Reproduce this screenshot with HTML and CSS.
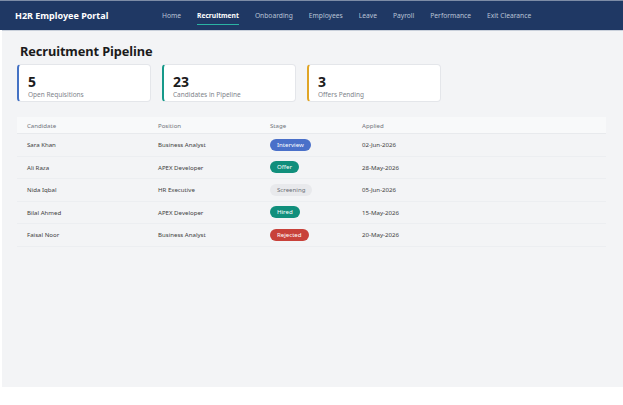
FILE: index.html
```html
<!DOCTYPE html>
<html lang="en">
<head>
  <meta charset="UTF-8">
  <meta name="viewport" content="width=device-width, initial-scale=1.0">
  <title>H2R Employee Portal</title>
  <link rel="stylesheet" href="styles.css">
</head>
<body>
  <!-- Top bar -->
  <header class="topbar">
    <div class="brand">H2R Employee Portal</div>
    <nav class="nav">
      <a href="#">Home</a>
      <a href="#" class="active">Recruitment</a>
      <a href="#">Onboarding</a>
      <a href="#">Employees</a>
      <a href="#">Leave</a>
      <a href="#">Payroll</a>
      <a href="#">Performance</a>
      <a href="#">Exit Clearance</a>
    </nav>
  </header>

  <main class="page">
    <h1 class="page-title">Recruitment Pipeline</h1>

    <section class="stats">
      <div class="stat blue">
        <div class="stat-num">5</div>
        <div class="stat-label">Open Requisitions</div>
      </div>
      <div class="stat teal">
        <div class="stat-num">23</div>
        <div class="stat-label">Candidates in Pipeline</div>
      </div>
      <div class="stat amber">
        <div class="stat-num">3</div>
        <div class="stat-label">Offers Pending</div>
      </div>
    </section>

    <table class="pipeline">
      <thead>
        <tr>
          <th class="col-name">Candidate</th>
          <th class="col-pos">Position</th>
          <th class="col-stage">Stage</th>
          <th>Applied</th>
        </tr>
      </thead>
      <tbody>
        <tr>
          <td>Sara Khan</td>
          <td>Business Analyst</td>
          <td><span class="badge interview">Interview</span></td>
          <td>02-Jun-2026</td>
        </tr>
        <tr>
          <td>Ali Raza</td>
          <td>APEX Developer</td>
          <td><span class="badge offer">Offer</span></td>
          <td>28-May-2026</td>
        </tr>
        <tr>
          <td>Nida Iqbal</td>
          <td>HR Executive</td>
          <td><span class="badge screening">Screening</span></td>
          <td>05-Jun-2026</td>
        </tr>
        <tr>
          <td>Bilal Ahmed</td>
          <td>APEX Developer</td>
          <td><span class="badge hired">Hired</span></td>
          <td>15-May-2026</td>
        </tr>
        <tr>
          <td>Faisal Noor</td>
          <td>Business Analyst</td>
          <td><span class="badge rejected">Rejected</span></td>
          <td>20-May-2026</td>
        </tr>
      </tbody>
    </table>
  </main>
</body>
</html>
```

FILE: styles.css
```css
body {
  margin: 0;
  padding: 0;
  background-color: #ffffff;
  font-family: 'Noto Sans', sans-serif;
  color: #222;
}

/* Top navigation bar */
.topbar {
  display: flex;
  align-items: center;
  height: 29px;
  padding: 0 15px;
  background-color: #1f3864;
  border-top: 1px solid #7d8ca6;
}

.brand {
  color: #ffffff;
  font-size: 9px;
  font-weight: bold;
  width: 147px;
}

.nav {
  display: flex;
  gap: 16px;
  height: 100%;
}

.nav a {
  display: flex;
  align-items: center;
  color: #b9c4d6;
  text-decoration: none;
  font-size: 6.7px;
  position: relative;
}

.nav a.active {
  color: #ffffff;
  font-weight: bold;
}

.nav a.active::after {
  content: "";
  position: absolute;
  left: 0;
  right: 0;
  bottom: 5px;
  height: 1.5px;
  background-color: #2bb3a3;
}

/* Main area */
.page {
  margin-left: 2px;
  height: 357px;
  background-color: #f3f4f6;
  padding: 11px 17px 0 15px;
  box-sizing: border-box;
  border-top: 1px solid #c9d0db;
}

.page-title {
  margin: 0 0 4px 3px;
  font-size: 12.8px;
  letter-spacing: -0.1px;
  line-height: 18px;
  font-weight: bold;
  color: #1b1b1b;
}

/* Stat cards */
.stats {
  display: flex;
  gap: 11px;
  margin-bottom: 15px;
}

.stat {
  width: 134px;
  height: 38px;
  box-sizing: border-box;
  background-color: #ffffff;
  border: 1px solid #e4e6ea;
  border-left: 2px solid #4472c4;
  border-radius: 4px;
  padding: 8px 9px 0;
}

.stat.teal { border-left-color: #16998a; }
.stat.amber { border-left-color: #e0a526; }

.stat-num {
  font-size: 14px;
  font-weight: bold;
  line-height: 17px;
  color: #1b1b1b;
}

.stat-label {
  font-size: 6.5px;
  color: #80848b;
  line-height: 9px;
}

/* Pipeline table */
.pipeline {
  width: 589px;
  border-collapse: collapse;
  font-size: 6.1px;
}

.pipeline th {
  text-align: left;
  font-weight: normal;
  color: #70747b;
  background-color: #f8f9fa;
  height: 16px;
  padding: 0 10px;
  border-bottom: 1px solid #e8eaed;
}

.pipeline td {
  height: 21.5px;
  padding: 0 10px;
  color: #3d3d3d;
  border-bottom: 1px solid #eceef1;
}

.col-name { width: 111px; }
.col-pos { width: 92px; }
.col-stage { width: 72px; }

.badge {
  display: inline-block;
  padding: 1px 7px;
  border-radius: 7px;
  font-size: 6.1px;
  line-height: 10px;
  color: #ffffff;
}

.badge.interview { background-color: #4a70c9; }
.badge.offer { background-color: #118f7c; }
.badge.hired { background-color: #118f7c; }
.badge.rejected { background-color: #c8413a; }
.badge.screening {
  background-color: #e8e9ec;
  color: #6b6f76;
}
```
